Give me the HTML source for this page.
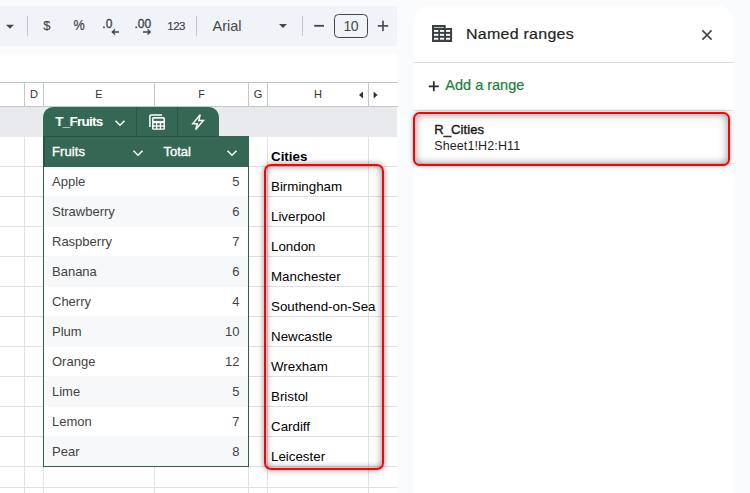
<!DOCTYPE html>
<html><head><meta charset="utf-8">
<style>
html,body{margin:0;padding:0;}
body{width:750px;height:493px;overflow:hidden;background:#f9fbfd;position:relative;font-family:"Liberation Sans",sans-serif;}
.abs{position:absolute;}
.t{position:absolute;white-space:nowrap;line-height:1;}
#toolbar{left:0;top:6px;width:397px;height:40px;background:#f0f4f9;}
#sheet{left:0;top:54px;width:397px;height:439px;background:#fff;overflow:hidden;}
.hl{position:absolute;left:0;width:397px;height:1px;background:#e1e1e1;}
.vl{position:absolute;top:107px;width:1px;height:386px;background:#e1e1e1;}
.ch{position:absolute;top:83px;height:23px;line-height:23px;font-size:11px;color:#333;text-align:center;}
.fr{position:absolute;left:44px;width:204px;height:30px;}
.fr.alt{background:#f6f8f9;}
.fn{position:absolute;left:52px;font-size:13px;color:#434343;line-height:30px;white-space:nowrap;}
.fv{position:absolute;right:158.5px;font-size:13px;color:#434343;line-height:30px;white-space:nowrap;}
.ct{position:absolute;left:271px;font-size:13.33px;color:#000;line-height:30px;white-space:nowrap;}
#panel{left:414px;top:6px;width:320px;height:500px;background:#fff;border-radius:16px 16px 0 0;}
</style></head><body>

<!-- toolbar -->
<div id="toolbar" class="abs"></div>
<svg class="abs" style="left:0;top:0" width="400" height="54" viewBox="0 0 400 54">
  <path d="M6 24.8 L14 24.8 L10 28.8 Z" fill="#444746"/>
  <rect x="27" y="16" width="1" height="20" fill="#c7c7c7"/>
  <rect x="196" y="16" width="1" height="20" fill="#c7c7c7"/>
  <rect x="302" y="16" width="1" height="20" fill="#c7c7c7"/>
  <path d="M279 24 L287 24 L283 28 Z" fill="#444746"/>
  <!-- arrows -->
  <path d="M119 32 H112.5 M115 29.5 L112.3 32 L115 34.5" stroke="#444746" stroke-width="1.4" fill="none"/>
  <path d="M143 32 H150 M147.5 29.5 L150.2 32 L147.5 34.5" stroke="#444746" stroke-width="1.4" fill="none"/>
  <!-- minus / plus -->
  <rect x="314.2" y="24.9" width="9.8" height="1.8" fill="#444746"/>
  <rect x="377.8" y="25.1" width="10.4" height="1.6" fill="#444746"/>
  <rect x="382.2" y="20.7" width="1.6" height="10.4" fill="#444746"/>
  <rect x="334.5" y="14.5" width="33" height="23" rx="4" ry="4" fill="none" stroke="#444746" stroke-width="1"/>
</svg>
<div class="t" id="t_dollar" style="left:43.3px;top:18.6px;font-size:13px;color:#3c4043;-webkit-text-stroke:0.1px #3c4043;">$</div>
<div class="t" id="t_pct" style="left:73.1px;top:18px;font-size:14px;color:#3c4043;-webkit-text-stroke:0.2px #3c4043;transform:scaleX(.9);transform-origin:50% 50%;">%</div>
<div class="t" id="t_d0" style="left:102.3px;top:18.4px;font-size:12px;color:#3c4043;-webkit-text-stroke:0.3px #3c4043;">.0</div>
<div class="t" id="t_d00" style="left:134.4px;top:18.4px;font-size:12px;color:#3c4043;-webkit-text-stroke:0.3px #3c4043;">.00</div>
<div class="t" id="t_123" style="left:167.3px;top:20.6px;font-size:11.5px;color:#3c4043;letter-spacing:-0.5px;-webkit-text-stroke:0.15px #3c4043;">123</div>
<div class="t" id="t_arial" style="left:212.5px;top:19px;font-size:14.5px;color:#444746;">Arial</div>
<div class="t" id="t_10" style="left:343.5px;top:18.5px;font-size:14px;color:#444746;letter-spacing:-0.5px;">10</div>

<!-- sheet -->
<div id="sheet" class="abs"></div>
<div class="abs" style="left:0;top:0;width:398px;height:493px;overflow:hidden;">
  <!-- col header -->
  <div class="abs" style="left:0;top:82px;width:398px;height:1px;background:#c4c7c5;"></div>
  <div class="abs" style="left:0;top:106px;width:398px;height:1px;background:#c4c7c5;"></div>
  <div class="abs" style="left:24px;top:83px;width:1px;height:23px;background:#c4c7c5;"></div>
  <div class="abs" style="left:43px;top:83px;width:1px;height:23px;background:#c4c7c5;"></div>
  <div class="abs" style="left:154px;top:83px;width:1px;height:23px;background:#c4c7c5;"></div>
  <div class="abs" style="left:248px;top:83px;width:1px;height:23px;background:#c4c7c5;"></div>
  <div class="abs" style="left:267px;top:83px;width:1px;height:23px;background:#c4c7c5;"></div>
  <div class="abs" style="left:368px;top:83px;width:1px;height:23px;background:#c4c7c5;"></div>
  <div class="ch" style="left:25px;width:18px;">D</div>
  <div class="ch" style="left:44px;width:110px;">E</div>
  <div class="ch" style="left:155px;width:93px;">F</div>
  <div class="ch" style="left:249px;width:18px;">G</div>
  <div class="ch" style="left:268px;width:100px;">H</div>
  <svg class="abs" style="left:355px;top:88px" width="30" height="14" viewBox="0 0 30 14">
    <path d="M8 3.5 L8 10.5 L4 7 Z" fill="#333"/>
    <path d="M18.6 3.5 L18.6 10.5 L22.6 7 Z" fill="#333"/>
  </svg>
  <!-- gray row -->
  <div class="abs" style="left:0;top:107px;width:397px;height:30px;background:#e8eaed;"></div>
  <!-- grid -->
  <div class="vl" style="left:24px;top:137px;"></div>
  <div class="vl" style="left:43px;top:137px;"></div>
  <div class="vl" style="left:154px;top:137px;"></div>
  <div class="vl" style="left:248px;top:137px;"></div>
  <div class="vl" style="left:267px;top:137px;"></div>
  <div class="vl" style="left:368px;top:137px;"></div>
  <div class="hl" style="top:166px;"></div>
  <div class="hl" style="top:196px;"></div>
  <div class="hl" style="top:226px;"></div>
  <div class="hl" style="top:256px;"></div>
  <div class="hl" style="top:286px;"></div>
  <div class="hl" style="top:316px;"></div>
  <div class="hl" style="top:346px;"></div>
  <div class="hl" style="top:376px;"></div>
  <div class="hl" style="top:406px;"></div>
  <div class="hl" style="top:436px;"></div>
  <div class="hl" style="top:466px;"></div>
  <div class="hl" style="top:487px;"></div>

  <!-- table -->
  <div class="abs" style="left:43px;top:107px;width:176px;height:30px;background:#356854;border-radius:10px 10px 0 0;"></div>
  <div class="abs" style="left:43px;top:136px;width:206px;height:31px;background:#356854;"></div>
  <div class="abs" style="left:43px;top:136px;width:176px;height:1px;background:#2a5343;"></div>
  <div class="abs" style="left:136px;top:107px;width:1px;height:29px;background:#2a5343;"></div>
  <div class="abs" style="left:177px;top:107px;width:1px;height:29px;background:#2a5343;"></div>
  <div class="abs" style="left:43px;top:137px;width:1.5px;height:30px;background:#2a5343;"></div>
  <div class="abs" style="left:43px;top:167px;width:206px;height:300px;background:#2f5d4b;"></div>
  <div class="fr" style="top:167px;background:#fff;"></div>
  <div class="fr alt" style="top:196px;height:31px;"></div>
  <div class="fr" style="top:227px;background:#fff;"></div>
  <div class="fr alt" style="top:256px;height:31px;"></div>
  <div class="fr" style="top:287px;background:#fff;"></div>
  <div class="fr alt" style="top:316px;height:31px;"></div>
  <div class="fr" style="top:347px;background:#fff;"></div>
  <div class="fr alt" style="top:376px;height:31px;"></div>
  <div class="fr" style="top:407px;background:#fff;"></div>
  <div class="fr alt" style="top:436px;height:30px;"></div>

  <div class="t" id="t_tf" style="left:55.3px;top:114.5px;font-size:13.5px;font-weight:bold;color:#fff;letter-spacing:-0.75px;">T_Fruits</div>
  <div class="t" id="t_fruits" style="left:52px;top:144.5px;font-size:13px;color:#fff;-webkit-text-stroke:0.35px #fff;letter-spacing:0.1px;">Fruits</div>
  <div class="t" id="t_total" style="left:163.5px;top:144.5px;font-size:13px;color:#fff;-webkit-text-stroke:0.35px #fff;">Total</div>
  <svg class="abs" style="left:100px;top:107px" width="150" height="60" viewBox="100 107 150 60">
    <path d="M115.5 120.8 L120 125.2 L124.5 120.8" stroke="#fff" stroke-width="1.5" fill="none"/>
    <path d="M133.5 150.8 L138 155.2 L142.5 150.8" stroke="#fff" stroke-width="1.5" fill="none"/>
    <path d="M227.5 150.8 L232 155.2 L236.5 150.8" stroke="#fff" stroke-width="1.5" fill="none"/>
    <!-- calculator icon -->
    <path d="M149.9 127 V116.2 Q149.9 114.9 151.2 114.9 H162" stroke="#fff" stroke-width="1.5" fill="none"/>
    <rect x="152" y="117" width="13" height="12.8" rx="1.6" fill="#fff"/>
    <g fill="#356854">
      <rect x="153.6" y="118.7" width="9.9" height="2.2"/>
      <rect x="153.6" y="123.2" width="2.4" height="2.1"/><rect x="157.3" y="123.2" width="2.5" height="2.1"/><rect x="161.1" y="123.2" width="2.4" height="2.1"/>
      <rect x="153.6" y="126.7" width="2.4" height="1.8"/><rect x="157.3" y="126.7" width="2.5" height="1.8"/><rect x="161.1" y="126.7" width="2.4" height="1.8"/>
    </g>
    <!-- lightning -->
    <path d="M200.2 114.6 L192.8 123.7 L197.3 123.7 L195.7 129.6 L203.4 120.4 L198.9 120.4 Z" stroke="#fff" stroke-width="1.5" fill="none" stroke-linejoin="miter"/>
  </svg>

  <div class="fn" style="top:167px;">Apple</div><div class="fv" style="top:167px;">5</div>
  <div class="fn" style="top:197px;">Strawberry</div><div class="fv" style="top:197px;">6</div>
  <div class="fn" style="top:227px;">Raspberry</div><div class="fv" style="top:227px;">7</div>
  <div class="fn" style="top:257px;">Banana</div><div class="fv" style="top:257px;">6</div>
  <div class="fn" style="top:287px;">Cherry</div><div class="fv" style="top:287px;">4</div>
  <div class="fn" style="top:317px;">Plum</div><div class="fv" style="top:317px;">10</div>
  <div class="fn" style="top:347px;">Orange</div><div class="fv" style="top:347px;">12</div>
  <div class="fn" style="top:377px;">Lime</div><div class="fv" style="top:377px;">5</div>
  <div class="fn" style="top:407px;">Lemon</div><div class="fv" style="top:407px;">7</div>
  <div class="fn" style="top:437px;">Pear</div><div class="fv" style="top:437px;">8</div>

  <div class="ct" style="top:142px;font-weight:bold;">Cities</div>
  <div class="ct" style="top:172px;">Birmingham</div>
  <div class="ct" style="top:202px;">Liverpool</div>
  <div class="ct" style="top:232px;">London</div>
  <div class="ct" style="top:262px;">Manchester</div>
  <div class="ct" style="top:292px;">Southend-on-Sea</div>
  <div class="ct" style="top:322px;">Newcastle</div>
  <div class="ct" style="top:352px;">Wrexham</div>
  <div class="ct" style="top:382px;">Bristol</div>
  <div class="ct" style="top:412px;">Cardiff</div>
  <div class="ct" style="top:442px;">Leicester</div>

  <div class="abs" style="left:264px;top:164.3px;width:116.3px;height:302px;border:2px solid #f00;border-radius:7px;box-shadow:0 0 6px rgba(0,0,0,.42), inset 0 0 7px rgba(0,0,0,.48);"></div>
</div>

<!-- panel -->
<div id="panel" class="abs"></div>
<svg class="abs" style="left:430px;top:22px" width="26" height="22" viewBox="430 22 26 22">
  <path d="M432 25 H445.7 V28 H452.1 V41.9 H432 Z" fill="#3c4043"/>
  <rect x="434" y="27" width="9.8" height="0.9" fill="#b7e1cd"/>
  <g fill="#fff">
    <rect x="434" y="30" width="4.3" height="1.9"/><rect x="440" y="30" width="4.1" height="1.9"/><rect x="446" y="30" width="4.1" height="1.9"/>
    <rect x="434" y="33.9" width="4.3" height="1.9"/><rect x="440" y="33.9" width="4.1" height="1.9"/><rect x="446" y="33.9" width="4.1" height="1.9"/>
    <rect x="434" y="37.8" width="4.3" height="1.9"/><rect x="440" y="37.8" width="4.1" height="1.9"/><rect x="446" y="37.8" width="4.1" height="1.9"/>
  </g>
</svg>
<div class="t" id="t_named" style="left:466px;top:26.1px;font-size:15px;color:#1f1f1f;-webkit-text-stroke:0.2px #1f1f1f;letter-spacing:0.25px;transform:scaleX(1.065);transform-origin:0 50%;">Named ranges</div>
<svg class="abs" style="left:698px;top:26px" width="18" height="18" viewBox="698 26 18 18">
  <path d="M702.4 30.4 L711.6 39.6 M711.6 30.4 L702.4 39.6" stroke="#3c4043" stroke-width="1.5" fill="none"/>
</svg>
<div class="abs" style="left:414px;top:62px;width:320px;height:1px;background:#dadce0;"></div>
<svg class="abs" style="left:426px;top:78px" width="16" height="16" viewBox="426 78 16 16">
  <path d="M428.8 86.3 H438.8 M433.8 81.3 V91.3" stroke="#2b2b2b" stroke-width="1.75" fill="none"/>
</svg>
<div class="t" id="t_add" style="left:445.3px;top:78px;font-size:14.5px;color:#188038;-webkit-text-stroke:0.2px #188038;">Add a range</div>
<div class="abs" style="left:414px;top:110px;width:320px;height:1px;background:#e3e3e3;"></div>
<div class="abs" style="left:414px;top:163px;width:320px;height:1px;background:#e3e3e3;"></div>
<div class="t" id="t_rc" style="left:434.2px;top:122.5px;font-size:13px;color:#1f1f1f;-webkit-text-stroke:0.45px #1f1f1f;letter-spacing:0.1px;">R_Cities</div>
<div class="t" id="t_sh" style="left:434.2px;top:140.3px;font-size:12.5px;color:#1f1f1f;letter-spacing:0.12px;">Sheet1!H2:H11</div>
<div class="abs" style="left:413.4px;top:111.5px;width:312.6px;height:50.1px;border:2.4px solid #f00;border-radius:6.5px;box-shadow:0 0 5px rgba(0,0,0,.3), inset 0 0 8px rgba(0,0,0,.45);"></div>

</body></html>
